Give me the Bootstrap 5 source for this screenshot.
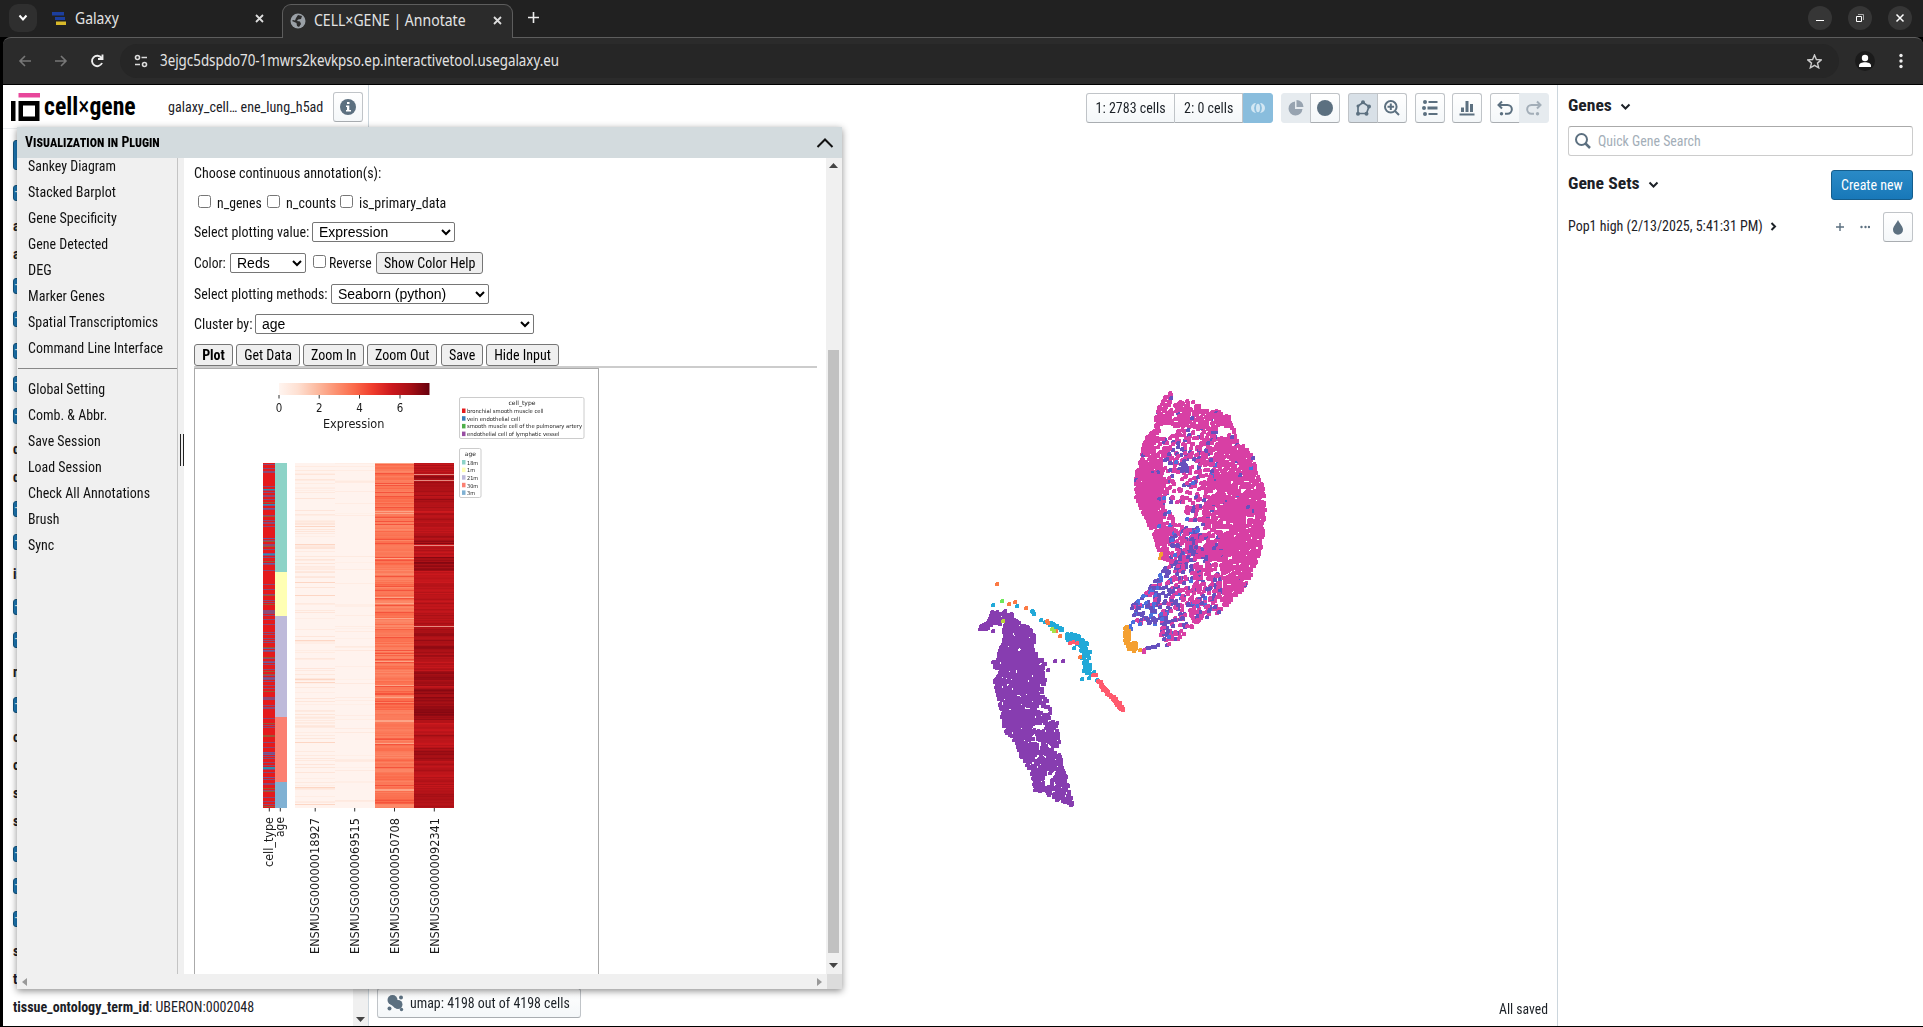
<!DOCTYPE html>
<html lang="en">
<head>
<meta charset="utf-8">
<title>CELL×GENE | Annotate</title>
<link href="https://cdn.jsdelivr.net/npm/bootstrap@5.3.0/dist/css/bootstrap.min.css" rel="stylesheet">
<script src="https://cdn.jsdelivr.net/npm/bootstrap@5.3.0/dist/js/bootstrap.bundle.min.js"></script>
<style>
body{width:1923px;height:1027px;overflow:hidden;background:#000;font:14px/18px "Roboto Condensed",Roboto,sans-serif;font-stretch:75%;color:#1c2127}
svg{display:block;flex:none}
.fit{display:inline-block;white-space:nowrap;flex:none}
.fit>span{display:inline-block;transform-origin:0 50%}
/* browser chrome */
.tabstrip{height:37px;background:#212121;color:#e3e3e3;font:15.5px/20px "Noto Sans",sans-serif}
.tabstrip .fit,.urlbar .fit{margin-bottom:2px}
.tabmenu{width:28px;height:28px;border-radius:9px;background:#2f2f2f;margin:4px 0 0 9px}
.tab-a{width:245px;height:37px;padding-left:15px}
.tab-b{width:231px;height:34px;margin-top:4px;background:#2b2b2b;border:1px solid #5d5d5d;border-bottom:0;border-radius:9px 9px 0 0;padding:0 0 2px 7px;position:relative;z-index:2}
.winbtn{width:24px;height:24px;border-radius:50%;background:#363636;margin-top:6px}
.urlbar{height:47px;background:#2b2b2b;border-top:1px solid #5d5d5d;margin-left:3px;border-radius:8px 8px 0 0;color:#e3e3e3;font:15.5px/20px "Noto Sans",sans-serif}
.omni{height:34px;border-radius:17px;background:#262626}
/* app */
.app{height:941px;margin-left:3px;background:#fff}
.side{width:366px;border-right:1px solid #ccd6dd}
.side-head{height:44px;border-bottom:1px solid #eaedf0}
.b-btn{height:30px;background:linear-gradient(#fff,#f4f7f9);border:1px solid #c0c4c8;border-bottom-color:#a9adb1;border-radius:3px}
.rows{height:897px;position:relative;padding-left:10px}
.chk{width:16px;height:16px;background:#1d7ab8;border-radius:3px;border:1px solid #15557f;color:#fff;line-height:13px}
.row-b{height:32.5px;display:flex;align-items:center}
.row-t{height:28px;display:flex;align-items:center;font-weight:700}
.row-b+.row-t,.row-t+.row-b{margin-top:2.3px}
.sbar{position:absolute;right:0;top:0;width:15px;height:897px;background:#f0f0f0}
.sq{width:30px;height:30px;display:flex;align-items:center;justify-content:center}
.sq+.sq{margin-left:-1px}
.off{background:#e6ebef;border-color:#e6ebef}
.genes{width:366px;border-left:1px solid #ccd6dd;padding:0 10px}
/* floating window */
.win{position:absolute;left:17px;top:127px;width:825px;height:862px;background:#f0f0f0;box-shadow:0 2px 7px rgba(0,0,0,.45)}
.win-head{height:31px;background:#d3dbde;color:#000}
.menu{width:160px;margin-left:1px;border-right:1px solid #c4c4c4;color:#111;overflow:hidden}
.mi{height:26px;line-height:26px;padding-left:10px}
.grip{width:6px;height:816px}
.body-w{width:642px;background:#fff;color:#111;padding-left:10px}
.ln{display:flex;align-items:center}
.win select{height:20px;font:14px "Liberation Sans",sans-serif;background:#fff;border:1px solid #767676;border-radius:2px;padding:0 0 0 2px;color:#000}
.win button{height:22px;font:inherit;font-size:14px;border:1px solid #767676;border-radius:3px;background:#efefef;color:#000;padding:0;display:flex;align-items:center;justify-content:center}
.win input{width:13px;height:13px;margin:0}
.frame{width:405px;height:606px;border:1px solid #aaa;border-bottom:0}
</style>
</head>
<body>
<div class="tabstrip d-flex">
  <div class="tabmenu d-flex align-items-center justify-content-center"><svg width="10" height="8" fill="none" stroke="#fff" stroke-width="2"><path d="M1.5 1.5 5 5.500 8.500 1.500"/></svg></div>
  <div class="tab-a d-flex align-items-center">
    <svg width="14" height="14"><path fill="#1c3f9e" d="M0 0h12v3.500H0zM3 5h10v3H3z"/><path fill="#d8b92a" d="M4 9.500h10V13H4z"/></svg>
    <span class="fit" data-w="44" style="margin-left:9px">Galaxy</span>
    <svg class="ms-auto" style="margin-right:18px" width="9" height="9" stroke="#ddd" stroke-width="1.800"><path d="M1 1 8 8M8 1 1 8"/></svg>
  </div>
  <div class="tab-b d-flex align-items-center">
    <svg width="16" height="16"><circle cx="8" cy="8" r="7.500" fill="#9aa0a6"/><path fill="#2b2b2b" d="M8 2l4 1-1 3-3 .5L7 8l3 .5 1 2.500-2 3-2-1-.5-3L2 8l1-1 2 .5L6 5z"/></svg>
    <span class="fit" data-w="152" style="margin-left:8px">CELL×GENE | Annotate</span>
    <svg style="margin-left:27px" width="9" height="9" stroke="#ddd" stroke-width="1.800"><path d="M1 1 8 8M8 1 1 8"/></svg>
  </div>
  <svg style="margin:12px 0 0 15px" width="11" height="11" stroke="#eee" stroke-width="1.600"><path d="M5.500 0V11M0 5.500H11"/></svg>
  <div class="ms-auto d-flex gap-3 pe-2">
    <div class="winbtn"><svg width="24" height="24" stroke="#fff"><path d="M8 14.500H16"/></svg></div>
    <div class="winbtn"><svg width="24" height="24" fill="none" stroke="#fff"><path d="M8.500 10.500h5v5h-5z"/><path stroke="#aaa" d="M10 8.500h5.500V14"/></svg></div>
    <div class="winbtn" style="margin-right:3px"><svg width="24" height="24" stroke="#fff" stroke-width="1.500"><path d="M8.500 8.500l7 7M15.500 8.500l-7 7"/></svg></div>
  </div>
</div>
<div class="urlbar d-flex align-items-center">
  <svg class="me-2" style="margin-left:15px" width="88" height="20" fill="none" stroke="#777" stroke-width="1.600"><path d="M13 10H2M7 5 2 10l5 5M37 10h11M43 5l5 5-5 5"/><path stroke="#eee" stroke-width="1.900" d="M83.500 7A5.200 5.200 0 1 0 84 12M84.500 3.500V8H80"/></svg>
  <div class="omni flex-grow-1 d-flex align-items-center" style="margin-left:6px">
    <svg style="margin-left:14px" width="14" height="14" fill="none" stroke="#ddd" stroke-width="1.600"><circle cx="3.500" cy="3.500" r="2"/><path d="M7.500 3.500H13M1 10.500H6"/><circle cx="10.500" cy="10.500" r="2"/></svg>
    <span class="fit" data-w="399" style="margin-left:12px">3ejgc5dspdo70-1mwrs2kevkpso.ep.interactivetool.usegalaxy.eu</span>
    <svg class="ms-auto" style="margin-right:17px" width="15" height="15" fill="none" stroke="#ccc" stroke-width="1.400"><path d="M7.500 1l1.900 4.500 4.800.4-3.700 3.200 1.200 4.700-4.200-2.500-4.200 2.500 1.200-4.700L.8 5.900l4.800-.4z"/></svg>
  </div>
  <svg style="margin-left:16px" width="20" height="20"><circle cx="10" cy="10" r="10" fill="#1b1b1b"/><circle cx="10" cy="7" r="3.200" fill="#fff"/><path fill="#fff" d="M4 16v-1.500c0-4.500 12-4.500 12 0V16z"/></svg>
  <svg style="margin:0 20px 0 24px" width="4" height="16" fill="#eee"><circle cx="2" cy="2.500" r="1.700"/><circle cx="2" cy="8" r="1.700"/><circle cx="2" cy="13.500" r="1.700"/></svg>
</div>
<div style="height:1px"></div>
<div class="app d-flex">
  <aside class="side">
    <div class="side-head d-flex align-items-center">
      <svg style="margin-left:8px" width="29" height="28"><path fill="#e8479b" d="M7.500 0H29V4.500H7.500z"/><path d="M0 8H4.500V28H0zM7.500 8H28.500V28H7.500zM12 12.500V23.500H24V12.500z" fill-rule="evenodd"/></svg>
      <span class="fit fw-bold text-black" data-w="92" style="font-size:25px;margin-left:4px">cell<span class="fw-normal">×</span>gene</span>
      <span class="fit" data-w="155" style="margin-left:32px">galaxy_cell… ene_lung_h5ad</span>
      <div class="b-btn sq" style="margin-left:10px"><svg width="16" height="16"><circle cx="8" cy="8" r="8" fill="#5c7080"/><path fill="#fff" d="M7 3h2.500v2H7zM6 6.500h3.300V11H11v1.500H6V11h1V8H6z"/></svg></div>
    </div>
    <div class="rows">
      <div style="height:48px;padding-top:11px"><div class="chk" style="width:150px;height:30px"></div></div>
      <div id="cats"></div>
      <div class="sbar d-flex align-items-end justify-content-center pb-1"><svg width="9" height="5" fill="#444"><path d="M0 0H9L4.500 5z"/></svg></div>
    </div>
  </aside>
  <main class="flex-grow-1 position-relative">
    <canvas id="umap" class="position-absolute top-0 start-0" width="1188" height="941"></canvas>
    <div class="position-relative d-flex justify-content-end h-100 flex-column">
      <div class="d-flex gap-2 position-absolute top-0 end-0" style="padding:8px 8px 0 0">
        <div class="d-flex">
          <div class="b-btn d-flex align-items-center justify-content-center rounded-end-0" style="width:89px"><span class="fit" data-w="70">1: 2783 cells</span></div>
          <div class="b-btn d-flex align-items-center justify-content-center rounded-0 border-start-0" style="width:68px"><span class="fit" data-w="49">2: 0 cells</span></div>
          <div class="b-btn sq rounded-start-0" style="background:#89bddd;border-color:#89bddd"><svg width="16" height="12"><g fill="#d3e7f3"><path d="M6 1A5 5 0 0 0 6 11 7.500 7.500 0 0 1 6 1zM10 1A5 5 0 0 1 10 11 7.500 7.500 0 0 0 10 1z"/><ellipse cx="8" cy="6" rx="2" ry="4.200"/></g></svg></div>
        </div>
        <div class="d-flex">
          <div class="b-btn sq off rounded-end-0"><svg width="16" height="16" fill="#97a3b0"><path d="M7 1.500V9h7.500A7 7 0 1 1 7 1.500zM8.500 0A7 7 0 0 1 15.500 7H8.500z"/></svg></div>
          <div class="b-btn sq rounded-start-0"><svg width="16" height="16"><circle cx="8" cy="8" r="8" fill="#5c7080"/></svg></div>
        </div>
        <div class="d-flex">
          <div class="b-btn sq rounded-end-0" style="background:#d8e0e7"><svg width="16" height="16" fill="none" stroke="#5c7080" stroke-width="1.700"><path d="M8 2.500 14 6.500 11.500 13.500H3L3 6z"/><g fill="#5c7080" stroke="none"><circle cx="8" cy="2.300" r="2"/><circle cx="14" cy="6.500" r="2"/><circle cx="11.500" cy="13.700" r="2"/><circle cx="3" cy="13.700" r="2"/><circle cx="3" cy="6" r="1.500"/></g></svg></div>
          <div class="b-btn sq rounded-start-0"><svg width="16" height="16" fill="none" stroke="#5c7080" stroke-width="2"><circle cx="6.800" cy="6.800" r="5.800"/><path d="M11 11 15 15M6.800 3.500v6.600M3.500 6.800h6.600"/></svg></div>
        </div>
        <div class="b-btn sq"><svg width="16" height="16" fill="#5c7080"><circle cx="3" cy="2" r="2"/><circle cx="2" cy="8" r="2"/><circle cx="3" cy="14" r="2"/><path d="M6.500 1h9v2h-9zM5.500 6.500h10v3h-10zM6.500 13h9v2h-9z"/></svg></div>
        <div class="b-btn sq"><svg width="16" height="16" fill="#5c7080"><path d="M.5 13.500h15v2H.5zM2 7.500h3V12H2zM6.500 1h3v11h-3zM11 4h3v8h-3z"/></svg></div>
        <div class="d-flex">
          <div class="b-btn sq rounded-end-0"><svg width="16" height="16" fill="none" stroke="#5c7080" stroke-width="2"><path d="M5 1.500 1.500 5 5 8.500M2 5h8.500a4.200 4.200 0 0 1 0 8.700H8"/><circle cx="4.500" cy="13.700" r="1.700" fill="#5c7080" stroke="none"/></svg></div>
          <div class="b-btn sq off rounded-start-0"><svg width="16" height="16" fill="none" stroke="#a3aeb8" stroke-width="2"><path d="M11 1.500 14.500 5 11 8.500M14 5H5.500a4.200 4.200 0 0 0 0 8.700H8"/><circle cx="11.500" cy="13.700" r="1.700" fill="#a3aeb8" stroke="none"/></svg></div>
        </div>
      </div>
      <div class="d-flex justify-content-between align-items-center" style="padding:0 9px 8px 8px">
        <div class="b-btn d-flex align-items-center" style="width:204px;padding-left:9px">
          <svg width="17" height="17" fill="#5c7080"><circle cx="5.500" cy="5" r="5"/><circle cx="11" cy="9.500" r="4.500"/><circle cx="14" cy="2.500" r="2"/><circle cx="2.500" cy="13.500" r="2"/><circle cx="14.500" cy="14.500" r="1.700"/><path d="M2 8l6 5 6-5-5-4z"/></svg>
          <span class="fit" data-w="160" style="margin-left:6px">umap: 4198 out of 4198 cells</span>
        </div>
        <span class="fit" data-w="49" style="margin-top:11px">All saved</span>
      </div>
    </div>
  </main>
  <aside class="genes">
    <div class="d-flex align-items-center" style="height:41px"><span class="fit fw-bold" data-w="44" style="font-size:16px;margin-top:1px">Genes</span><svg style="margin:2px 0 0 8px" width="11" height="8" fill="none" stroke="#1c2127" stroke-width="2"><path d="M1.500 1.500 5.500 5.500 9.500 1.500"/></svg></div>
    <div class="d-flex align-items-center" style="height:30px;border:1px solid #ccc;border-top-color:#aaa;border-radius:3px;padding-left:6px;color:#a3aeb8"><svg width="16" height="16" fill="none" stroke="#5c7080" stroke-width="2"><circle cx="6.500" cy="6.500" r="5.500"/><path stroke-width="2.500" d="M10.500 10.500 15 15"/></svg><span class="fit" data-w="103" style="margin-left:7px">Quick Gene Search</span></div>
    <div class="d-flex align-items-center" style="margin-top:14px;height:30px"><span class="fit fw-bold" data-w="72" style="font-size:16px;margin-bottom:3px">Gene Sets</span><svg style="margin-left:8px" width="11" height="8" fill="none" stroke="#1c2127" stroke-width="2"><path d="M1.500 1.500 5.500 5.500 9.500 1.500"/></svg>
      <div class="ms-auto d-flex align-items-center justify-content-center text-white" style="width:82px;height:30px;border-radius:3px;border:1px solid #155d8c;background:linear-gradient(#2a8ac6,#1878b8)"><span class="fit" data-w="62">Create new</span></div></div>
    <div class="d-flex align-items-center" style="margin-top:12px;height:30px"><span class="fit" data-w="195" style="margin-bottom:2px">Pop1 high (2/13/2025, 5:41:31 PM)</span><svg style="margin:0 0 2px 7px" width="7" height="9" fill="none" stroke="#1c2127" stroke-width="2"><path d="M1.500 1 5 4.500 1.500 8"/></svg>
      <svg class="ms-auto" width="34" height="8" fill="#5c7080"><path d="M0 3.300h3.300V0h1.400v3.300H8v1.400H4.700V8H3.300V4.700H0z"/><circle cx="25.500" cy="4" r="1.200"/><circle cx="29.500" cy="4" r="1.200"/><circle cx="33" cy="4" r="1.200"/></svg>
      <div class="b-btn sq" style="margin-left:13px"><svg width="12" height="15" fill="#5c7080"><path d="M6 0C8 4 11 6.500 11 9.700A5 5 0 0 1 1 9.700C1 6.500 4 4 6 0z"/></svg></div></div>
  </aside>
</div>

<section class="win">
  <div class="win-head d-flex align-items-center"><span class="fit fw-bold" data-w="135" style="margin:0 0 1px 8px;font-variant:small-caps;font-size:15.5px">Visualization in Plugin</span><svg class="ms-auto me-2" width="18" height="10" fill="none" stroke="#111" stroke-width="2"><path d="M1.500 9 9 1.500 16.500 9"/></svg></div>
  <div class="d-flex" style="height:816px">
    <nav class="menu">
      <div id="m1" style="margin-top:-5px"></div>
      <div style="border-top:1px solid #888;margin:7px 0 6px"></div>
      <div id="m2" style="padding-top:1px"></div>
    </nav>
    <svg class="grip" width="6" height="816" stroke="#222"><path d="M2.500 276V308M5.500 276V308"/></svg>
    <div class="body-w">
      <div class="ln" style="height:30px"><span class="fit" data-w="187">Choose continuous annotation(s):</span></div>
      <div class="ln" style="height:28px;padding:0 0 1px 4px"><input type="checkbox"><span class="fit" data-w="45" style="margin:3px 5px 0 6px">n_genes</span><input type="checkbox"><span class="fit" data-w="50" style="margin:3px 4px 0 6px">n_counts</span><input type="checkbox"><span class="fit" data-w="87" style="margin:3px 0 0 6px">is_primary_data</span></div>
      <div class="ln" style="height:32px"><span class="fit" data-w="115">Select plotting value:</span><select style="width:143px;margin-left:3px"><option>Expression</option></select></div>
      <div class="ln" style="height:30px"><span class="fit" data-w="32">Color:</span><select style="width:76px;margin-left:4px"><option>Reds</option></select><input type="checkbox" style="margin:0 3px 3px 7px"><span class="fit" data-w="43">Reverse</span><button style="width:107px;margin-left:4px"><span class="fit" data-w="91">Show Color Help</span></button></div>
      <div class="ln" style="height:32px"><span class="fit" data-w="134">Select plotting methods:</span><select style="width:158px;margin-left:3px"><option>Seaborn (python)</option></select></div>
      <div class="ln" style="height:28px"><span class="fit" data-w="58">Cluster by:</span><select style="width:279px;margin-left:3px"><option>age</option></select></div>
      <div class="d-flex" style="padding-top:6px;width:623px;border-bottom:2px solid #ccc;height:30px;gap:3px">
        <button style="width:39px" class="fw-bold"><span class="fit" data-w="23">Plot</span></button><button style="width:64px"><span class="fit" data-w="48">Get Data</span></button><button style="width:61px"><span class="fit" data-w="45">Zoom In</span></button><button style="width:70px"><span class="fit" data-w="54">Zoom Out</span></button><button style="width:42px;margin-left:1px"><span class="fit" data-w="26">Save</span></button><button style="width:73px"><span class="fit" data-w="57">Hide Input</span></button>
      </div>
      <div class="frame">
        <svg id="plot" width="403" height="604" viewBox="195 369 403 604" font-family="DejaVu Sans" fill="#1a1a1a"></svg>
      </div>
    </div>
    <div class="d-flex flex-column align-items-center" style="width:15px;padding:5px 0 6px">
      <svg width="9" height="5" fill="#444"><path d="M0 5H9L4.500 0z"/></svg>
      <div style="width:11px;height:603px;margin-top:182px;background:#c1c1c1"></div>
      <svg class="mt-auto" width="9" height="5" fill="#444"><path d="M0 0H9L4.500 5z"/></svg>
    </div>
  </div>
  <div class="d-flex align-items-center" style="height:15px"><svg style="margin-left:5px" width="5" height="8" fill="#999"><path d="M5 0V8L0 4z"/></svg><svg class="ms-auto" style="margin-right:5px" width="5" height="8" fill="#999"><path d="M0 0V8L5 4z"/></svg><div style="width:15px;height:15px;background:#dcdcdc"></div></div>
</section>

<script>
let seed=7;const R=()=>{seed=(seed*1664525+1013904223)%4294967296;return seed/4294967296};
const $=id=>document.getElementById(id);
// category list, b = categorical row with a checkbox, others are names
const cats=['b','assay','assay_ontology_term_id','b','b','b','b','b','development_stage','disease_id','b','b','is_primary_data','b','b','n_genes','b','organism','organism_ontology_term_id','self_reported','sex_id','b','b','b','suspension_type','tissue'];
$('cats').innerHTML=cats.map(c=>c=='b'?'<div class="row-b"><div class="chk">–</div></div>':`<div class="row-t">${c}</div>`).join('')+'<div class="row-t"><span class="fit" data-w="136">tissue_ontology_term_id</span><span class="fit fw-normal" data-w="105">: UBERON:0002048</span></div>';
const mi=[['Sankey Diagram',88.5],['Stacked Barplot',87.500],['Gene Specificity',88.500],['Gene Detected',80.500],['DEG',23.500],['Marker Genes',76.500],['Spatial Transcriptomics',130],['Command Line Interface',135.500],['Global Setting',77.500],['Comb. & Abbr.',79],['Save Session',72.500],['Load Session',73.500],['Check All Annotations',122],['Brush',31.500],['Sync',26]];
const mk=a=>a.map(([t,w])=>`<div class="mi"><span class="fit" data-w="${w}">${t.replace('&','&amp;')}</span></div>`).join('');
$('m1').innerHTML=mk(mi.slice(0,8));$('m2').innerHTML=mk(mi.slice(8));
document.querySelectorAll('.fit').forEach(e=>{const s=document.createElement('span');s.append(...e.childNodes);e.append(s);s.querySelectorAll('span').forEach(q=>q.style.display='inline');const n=s.offsetWidth,w=+e.dataset.w;e.style.width=w+'px';s.style.transform=`scaleX(${w/n})`});

// clustered heatmap
const reds=[[255,245,240],[254,224,210],[252,187,161],[252,146,114],[251,106,74],[239,59,44],[203,24,29],[165,15,21],[103,0,13]];
const red=v=>{v=Math.max(0,Math.min(.999,v))*8;const i=v|0,f=v-i;return`rgb(${reds[i].map((c,k)=>Math.round(c+(reds[i+1][k]-c)*f))})`};
let s='<defs><linearGradient id="cb">'+reds.map((c,i)=>`<stop offset="${i/8}" stop-color="rgb(${c})"/>`).join('')+'</linearGradient></defs><rect x="279" y="383" width="150.500" height="12" fill="url(#cb)"/>';
const rc=(x,y,w,h,f)=>{s+=`<rect x="${x}" y="${y}" width="${w}" height="${h}" fill="${f}"/>`};
const tx=(x,y,t,z,a,l)=>{s+=`<text x="${x}" y="${y}" font-size="${z}" text-anchor="${a||'start'}"${l?` textLength="${l}" lengthAdjust="spacingAndGlyphs"`:''}>${t}</text>`};
[279,319.2,359.5,400].forEach((x,i)=>{rc(x-.5,395,1,3.500,'#333');tx(x,412,i*2,11.4,'middle')});
tx(353.7,427.7,'Expression',11.4,'middle',61.5);
s+='<g fill="#fff" stroke="#ccc"><rect x="459.500" y="397.500" width="124.500" height="41" rx="1.500"/><rect x="459.500" y="448.500" width="21.500" height="49" rx="1.500"/></g>';
tx(522,405,'cell_type',6,'middle',27);
[['bronchial smooth muscle cell',76.5,'#e41a1c'],['vein endothelial cell',53,'#377eb8'],['smooth muscle cell of the pulmonary artery',115,'#4daf4a'],['endothelial cell of lymphatic vessel',92.5,'#984ea3']].forEach(([t,l,c],i)=>{rc(462,408.500+i*7.700,3.500,4.500,c);tx(467,413+i*7.700,t,5.5,'start',l)});
tx(470.3,456,'age',6,'middle',11);
[['18m','#8dd3c7'],['1m','#ffffb3'],['21m','#bebada'],['30m','#fb8072'],['3m','#80b1d3']].forEach(([t,c],i)=>{rc(462,460+i*7.600,3.500,4.500,c);tx(467,464.7+i*7.600,t,5.5)});
s+='<g shape-rendering="crispEdges">';
rc(263,463,12,345,'#e41a1c');
for(let y=464;y<807;y++){if(y>572&&y<584||y>625&&y<632||y>711&&y<715)continue;const r=R();if(r<.36)rc(263,y,12,1,r<.24?'#8a4a78':r<.30?'#9a5a35':r<.345?'#6f5a9a':'#2f8fb0')}
[[463,572,'#8dd3c7'],[572,616,'#ffffb3'],[616,717,'#bebada'],[717,782,'#fb8072'],[782,808,'#80b1d3']].forEach(([a,b,c])=>rc(275,a,12,b-a,c));
rc(295,463,80,345,red(.01));
let dk=.8,md=.45;
for(let y=463;y<808;y++){
 if(R()<.33)rc(295,y,40,1,red(R()<.12?.16:.04+R()*.06));
 if(R()<.14)rc(335,y,40,1,red(.03+R()*.04));
 if(R()<.3)md=.42+R()*.08;
 rc(375,y,39,1,red(R()<.04?.32:R()<.08?.56:md+(R()-.5)*.07));
 if(R()<.15)dk=.78+R()*.12;
 rc(414,y,40,1,R()<.022?'#e58a80':red(dk+(R()-.5)*.09));
}
s+='</g>';
[269.3,280.3,315.2,354.7,394.5,434.3].forEach(x=>rc(x-.5,808,1,3.500,'#333'));
[['cell_type',272.700,50,867],['age',283.900,20,837],['ENSMUSG00000018927',319.300,136,954],['ENSMUSG00000069515',359,136,954],['ENSMUSG00000050708',399,136,954],['ENSMUSG00000092341',438.700,136,954]].forEach(([t,x,l,y])=>{s+=`<text transform="translate(${x} ${y}) rotate(-90)" font-size="11.400" textLength="${l}" lengthAdjust="spacingAndGlyphs">${t}</text>`});
$('plot').innerHTML=s;

// embedding scatter; coordinates are given in window pixels
const g=$('umap').getContext('2d');g.translate(-369,-85);
const dot=(x,y,c)=>{g.fillStyle=c;x=Math.round(x);y=Math.round(y);g.fillRect(x-2,y-1,4,3);g.fillRect(x-1,y-2,3,4)};
const P='#d83fa4',V='#6650be',B='#4b70dd',K='#873db0',C='#22a9d8',O='#f4a031',D='#ff5a6e',N='#fb7a45';
const inside=(x,y,p)=>{let r=false;for(let i=0,j=p.length-1;i<p.length;j=i++){const[a,b]=p[i],[c,d]=p[j];if(b>y!=d>y&&x<(c-a)*(y-b)/(d-b)+a)r=!r}return r};
function fill(poly,ox,oy,n,f){const xs=poly.map(p=>p[0]),ys=poly.map(p=>p[1]),x0=Math.min(...xs),x1=Math.max(...xs),y0=Math.min(...ys),y1=Math.max(...ys);for(let i=0;i<n;i++){const x=x0+R()*(x1-x0),y=y0+R()*(y1-y0);if(!inside(x,y,poly))continue;const c=f(x,y);if(c)dot(ox+x/3,oy+y/3,c)}}
const near=(x,y,a,b,rx,ry)=>((x-a)/rx)**2+((y-b)/(ry||rx))**2<1;
const body=[[243,60],[250,90],[275,90],[315,98],[350,122],[385,122],[410,132],[430,155],[445,215],[465,225],[488,260],[505,320],[518,350],[526,410],[522,480],[510,540],[490,605],[467,650],[427,690],[387,727],[345,747],[300,775],[262,810],[236,830],[205,812],[198,790],[225,760],[240,690],[245,590],[208,550],[190,490],[160,430],[138,380],[136,330],[150,270],[163,205],[192,180],[198,130],[213,100]];
fill(body,1090,370,9500,(x,y)=>{
 if(near(x,y,268,432,20,32)||near(x,y,228,182,22)||near(x,y,400,185,20)||near(x,y,265,372,24,9)||near(x,y,265,330,14,24)||near(x,y,322,575,22,7)||near(x,y,375,575,22,6)||near(x,y,400,480,20,5))return R()<.012?P:0;
 let d=.55,v=.02;
 if(x>350&&y>210)d=.76;
 if(x<218&&y>285&&y<470)d=1;
 if(x<195&&y>180&&y<285)d=.8;
 if(y<170)d=.62;
 if(x>=218&&x<340&&y>=170&&y<470){d=.27;v=.28}
 if(x>=195&&x<218&&y>=170&&y<285)d=.3;
 if(x>=340&&x<385&&y<560){v=.1;d=.6}
 if(x>=235&&x<350&&y>=470&&y<590){d=.5;v=.42}
 if(x<400&&y>=590){d=x<300?.3:.42;v=x<300?.42:.25}
 if(x>=400)v=.015;
 if(R()>d)return 0;
 return R()<v?(R()<.12?B:V):P});
for(let i=0;i<22;i++)dot(1182+R()*6,464+R()*7,V);
fill([[205,595],[240,590],[250,680],[225,765],[200,765],[150,760],[118,740],[120,712],[165,672],[185,640]],1090,370,265,(x,y)=>R()<.55?V:(R()<.8-(x-120)/300?B:P));
[[120,768],[130,755],[150,762],[122,778],[170,835],[178,833],[187,832],[196,830],[203,825]].forEach((p,i)=>dot(1090+p[0]/3,370+p[1]/3,i<4?B:V));
for(let i=0;i<90;i++){const t=R();const x=t<.6?104+R()*14:112+R()*28,y=t<.6?768+R()*50:818+R()*24;dot(1090+x/3,370+y/3,O)}
[[150,839],[209,564],[214,553]].forEach(p=>dot(1090+p[0]/3,370+p[1]/3,O));dot(1144,650,P);dot(1144,652,P);dot(1163,558,P);
// purple lobe
fill([[57,202],[85,180],[98,155],[125,157],[142,152],[160,168],[180,193],[205,203],[222,225],[220,265],[240,295],[258,310],[250,345],[258,375],[245,400],[260,410],[266,440],[280,455],[265,480],[292,488],[298,545],[287,575],[302,590],[314,640],[325,680],[340,738],[325,740],[268,708],[252,692],[225,692],[212,630],[182,590],[167,545],[145,530],[125,480],[115,410],[104,370],[106,305],[118,275],[132,240],[130,195],[110,190],[90,200],[70,212]],960,560,5600,(x,y)=>{
 if(near(x,y,240,500,16,10)||near(x,y,262,662,14,18)||near(x,y,195,540,10,6))return 0;
 let d=.9;if(x>235&&y<480)d=.42;if(x>220&&y>470&&y<600)d=.5;if(y>600)d=.72;return R()<d?K:0});
[[286,302],[309,304],[264,331],[98,305],[100,212]].forEach(p=>dot(960+p[0]/3,560+p[1]/3,K));
for(let i=0;i<12;i++)dot(979+R()*6,624+R()*5,K);
const path=(pts,n,w,c)=>{for(let i=0;i<n;i++){const t=R()*(pts.length-1),k=t|0,f=t-k;dot(960+(pts[k][0]+(pts[k+1][0]-pts[k][0])*f+(R()-.5)*w)/3,560+(pts[k][1]+(pts[k+1][1]-pts[k][1])*f+(R()-.5)*w)/3,c)}};
path([[215,155],[240,180],[280,195],[310,213]],22,6,C);
path([[325,225],[345,238],[370,250],[375,275],[380,320],[385,335]],130,22,C);
[[98,135],[171,138],[366,358],[388,355],[410,360],[342,264],[390,275],[401,335]].forEach(p=>dot(960+p[0]/3,560+p[1]/3,C));
path([[415,362],[440,395],[470,425],[488,450]],85,7,D);
[[330,248],[340,246],[350,249],[400,345],[407,345],[480,430]].forEach(p=>dot(960+p[0]/3,560+p[1]/3,D));
[[110,72],[148,131],[164,126],[198,143],[262,182],[263,189],[289,213],[300,228],[360,292]].forEach(p=>dot(960+p[0]/3,560+p[1]/3,N));
dot(1002,601,'#6ee85a');dot(1052,629,'#a5e24a');dot(1054,631,'#a5e24a');dot(1003,621,'#b8d43a');
</script>
</body>
</html>
